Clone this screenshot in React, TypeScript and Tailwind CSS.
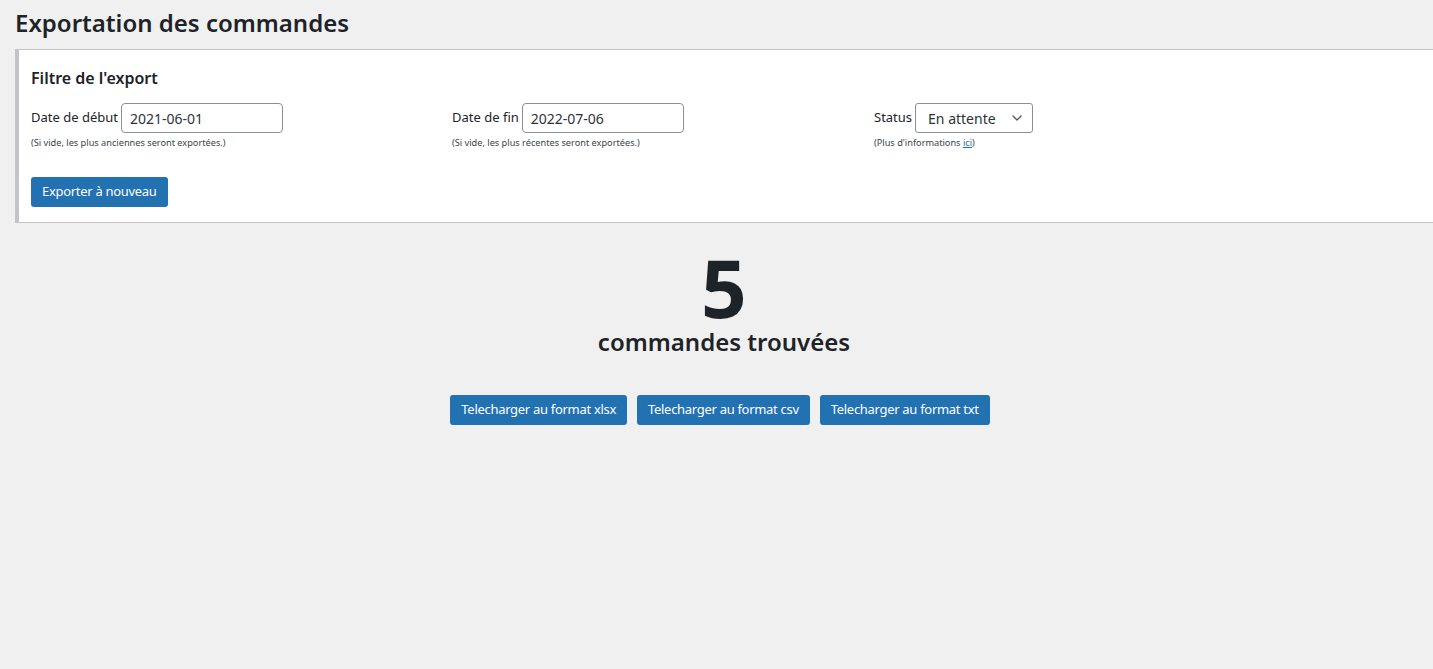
import { useState } from 'react'

function Chevron() {
  return (
    <svg width="16" height="16" viewBox="0 0 20 20" fill="none" className="absolute right-[8px] top-[7px] text-[#50575e]">
      <path d="M5 7.5l5 5 5-5" stroke="currentColor" strokeWidth="1.6" strokeLinecap="round" strokeLinejoin="round" />
    </svg>
  )
}

export default function App() {
  const [start, setStart] = useState('2021-06-01')
  const [end, setEnd] = useState('2022-07-06')
  const [status, setStatus] = useState('En attente')

  return (
    <div className="min-h-screen bg-[#f0f0f1] font-['Noto_Sans',sans-serif] text-[#1d2327]">
      <div className="pl-[15px]">
        <h1 className="pt-[8px] text-[24px] font-semibold leading-[30px]">Exportation des commandes</h1>

        <div className="mt-[11px] border-y border-l-4 border-[#c3c4c7] bg-white pl-[12px] pt-[18px] pb-[15px]">
          <h2 className="text-[16px] font-semibold leading-[20px]">Filtre de l'export</h2>

          <div className="mt-[15px] grid grid-cols-[421px_422px_auto]">
            <div>
              <label className="flex items-center gap-[3px] text-[13px]">
                Date de début
                <input
                  value={start}
                  onChange={(e) => setStart(e.target.value)}
                  className="h-[30px] w-[162px] rounded-[4px] border border-[#8c8f94] px-[8px] text-[14px] text-[#2c3338] outline-none"
                />
              </label>
              <p className="mt-[4px] text-[9.2px] leading-[12px] text-[#3c434a]">(Si vide, les plus anciennes seront exportées.)</p>
            </div>
            <div>
              <label className="flex items-center gap-[3px] text-[13px]">
                Date de fin
                <input
                  value={end}
                  onChange={(e) => setEnd(e.target.value)}
                  className="h-[30px] w-[162px] rounded-[4px] border border-[#8c8f94] px-[8px] text-[14px] text-[#2c3338] outline-none"
                />
              </label>
              <p className="mt-[4px] text-[9.2px] leading-[12px] text-[#3c434a]">(Si vide, les plus récentes seront exportées.)</p>
            </div>
            <div>
              <label className="flex items-center gap-[3px] text-[13px]">
                Status
                <span className="relative">
                  <select
                    value={status}
                    onChange={(e) => setStatus(e.target.value)}
                    className="h-[30px] w-[118px] appearance-none rounded-[3px] border border-[#8c8f94] bg-white pl-[12px] pr-[24px] text-[14px] text-[#2c3338] outline-none"
                  >
                    <option>En attente</option>
                    <option>En cours</option>
                    <option>Terminée</option>
                  </select>
                  <Chevron />
                </span>
              </label>
              <p className="mt-[4px] text-[9.2px] leading-[12px] text-[#3c434a]">
                (Plus d'informations <a href="#" className="text-[#2271b1] underline">ici</a>)
              </p>
            </div>
          </div>

          <button className="mt-[28px] h-[30px] rounded-[3px] bg-[#2271b1] px-[11px] text-[13px] tracking-[-0.3px] text-white">
            Exporter à nouveau
          </button>
        </div>

        <div className="flex flex-col items-center pt-[24px]">
          <div className="text-[80px] font-bold leading-[80px]">5</div>
          <div className="text-[24px] font-semibold leading-[30px]">commandes trouvées</div>
          <div className="mt-[38px] flex gap-[10px] pr-[8px]">
            <button className="h-[30px] rounded-[3px] bg-[#2271b1] px-[11px] text-[13px] tracking-[-0.3px] text-white">Telecharger au format xlsx</button>
            <button className="h-[30px] rounded-[3px] bg-[#2271b1] px-[11px] text-[13px] tracking-[-0.3px] text-white">Telecharger au format csv</button>
            <button className="h-[30px] rounded-[3px] bg-[#2271b1] px-[11px] text-[13px] tracking-[-0.3px] text-white">Telecharger au format txt</button>
          </div>
        </div>
      </div>
    </div>
  )
}
